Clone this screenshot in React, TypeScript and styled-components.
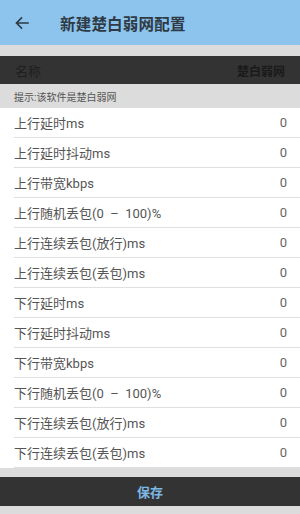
import React from "react";
import styled, { createGlobalStyle } from "styled-components";

const Global = createGlobalStyle`
  html, body { margin: 0; padding: 0; background: #dcdcdc; }
  body { font-family: Roboto, "Noto Sans CJK SC", "Noto Sans", sans-serif; }
`;

const Page = styled.div`
  width: 300px;
  height: 514px;
  display: flex;
  flex-direction: column;
  background: #dcdcdc;
  overflow: hidden;
`;

const Header = styled.div`
  height: 45px;
  background: #8cc4ee;
  display: flex;
  align-items: center;
  padding-left: 14px;
  box-sizing: border-box;
  flex-shrink: 0;
`;

const BackIcon = styled.svg`
  width: 16px;
  height: 16px;
  margin-right: 30px;
`;

const Title = styled.div`
  font-size: 15.5px;
  font-weight: 700;
  color: #2e3a44;
  letter-spacing: 0.2px;
`;

const Gap = styled.div<{ $h: number }>`
  height: ${(p) => p.$h}px;
  flex-shrink: 0;
`;

const DarkBar = styled.div`
  height: 28px;
  background: #333333;
  display: flex;
  align-items: center;
  justify-content: space-between;
  padding: 0 15px;
  flex-shrink: 0;
`;

const DarkLabel = styled.span`
  font-size: 13px;
  color: #1f1f1f;
`;

const DarkValue = styled.span`
  font-size: 12px;
  font-weight: 700;
  color: #1a1a1a;
`;

const Hint = styled.div`
  height: 24px;
  display: flex;
  align-items: center;
  padding-left: 14px;
  font-size: 10px;
  color: #555;
  flex-shrink: 0;
`;

const List = styled.div`
  background: #fff;
  display: flex;
  flex-direction: column;
  flex-shrink: 0;
`;

const Row = styled.div`
  height: 30px;
  margin-left: 14px;
  padding-right: 13px;
  border-bottom: 1px solid #e0e0e0;
  box-sizing: border-box;
  display: flex;
  align-items: center;
  justify-content: space-between;
`;

const RowLabel = styled.span`
  font-size: 13px;
  color: #555;
  white-space: pre;
`;

const RowValue = styled.span`
  font-size: 13px;
  color: #666;
`;

const SaveBar = styled.div`
  height: 29px;
  background: #333333;
  display: flex;
  align-items: center;
  justify-content: center;
  font-size: 13px;
  font-weight: 700;
  color: #7db7e4;
  flex-shrink: 0;
`;

const rows = [
  "上行延时ms",
  "上行延时抖动ms",
  "上行带宽kbps",
  "上行随机丢包(0 \u2013 100)%",
  "上行连续丢包(放行)ms",
  "上行连续丢包(丢包)ms",
  "下行延时ms",
  "下行延时抖动ms",
  "下行带宽kbps",
  "下行随机丢包(0 \u2013 100)%",
  "下行连续丢包(放行)ms",
  "下行连续丢包(丢包)ms",
];

export default function App() {
  return (
    <>
      <Global />
      <Page>
        <Header>
          <BackIcon viewBox="0 0 16 16" fill="none" stroke="#2e3a44" strokeWidth="1.6" strokeLinecap="square">
            <path d="M14 8H2.5M7.5 3L2.5 8l5 5" />
          </BackIcon>
          <Title>新建楚白弱网配置</Title>
        </Header>
        <Gap $h={11} />
        <DarkBar>
          <DarkLabel>名称</DarkLabel>
          <DarkValue>楚白弱网</DarkValue>
        </DarkBar>
        <Hint>提示:该软件是楚白弱网</Hint>
        <List>
          {rows.map((r) => (
            <Row key={r}>
              <RowLabel>{r.replace(" \u2013 ", "  \u2013  ")}</RowLabel>
              <RowValue>0</RowValue>
            </Row>
          ))}
        </List>
        <Gap $h={9} />
        <SaveBar>保存</SaveBar>
      </Page>
    </>
  );
}
